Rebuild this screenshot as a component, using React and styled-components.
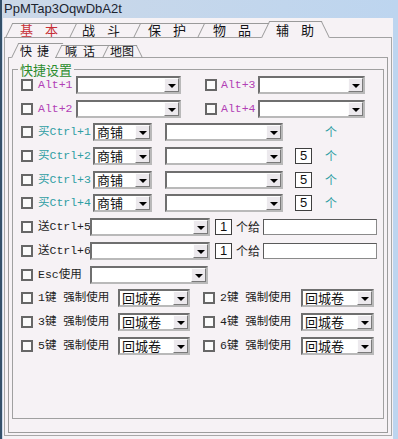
import React from "react";
import styled, { createGlobalStyle } from "styled-components";

const CJK = `"Noto Sans CJK SC", "Noto Sans", sans-serif`;
const MONO = `"Liberation Mono", "Noto Sans CJK SC", monospace`;
const SKEW = 0.4877; // tan(26deg)

const GlobalStyle = createGlobalStyle`
  html, body {
    margin: 0;
    padding: 0;
    background: #c6dbf1;
  }
  * {
    box-sizing: border-box;
  }
`;

const Window = styled.div`
  width: 398px;
  height: 439px;
  display: flex;
  flex-direction: column;
  background: linear-gradient(to right, #cbd8e8, #bdd5ef);
  border-left: 2px solid #34506a;
  overflow: hidden;
`;

const TitleBar = styled.div`
  height: 18px;
  flex-shrink: 0;
  padding-left: 2px;
  font: 13px/18px "Liberation Sans", Arial, sans-serif;
  color: #1c2430;
`;

const Client = styled.div`
  flex: 1;
  margin: 0 5px 0 1px;
  padding: 2px 1px 3px 1px;
  background: #f6f2f5;
  display: flex;
  flex-direction: column;
  min-height: 0;
`;

const TabStrip = styled.div`
  display: flex;
  align-items: flex-end;
  height: ${(p) => p.$h}px;
  flex-shrink: 0;
`;

const TabLead = styled.div`
  width: ${(p) => p.$w}px;
  border-bottom: 1px solid #a2a2a2;
`;

const TabFill = styled.div`
  flex: 1;
  border-bottom: 1px solid #a2a2a2;
`;

const Tab = styled.div`
  position: relative;
  flex-shrink: 0;
  width: ${(p) => p.$w}px;
  height: ${(p) => p.$h}px;
  padding: ${(p) => (p.$active ? 2 : 0)}px 0 0 ${(p) => p.$pad}px;
  font-family: ${CJK};
  font-size: ${(p) => p.$fs}px;
  line-height: ${(p) => p.$lh}px;
  letter-spacing: ${(p) => p.$ls}px;
  color: ${(p) => (p.$red ? "#c62f35" : "#121216")};
  white-space: nowrap;
  border-bottom: 1px solid ${(p) => (p.$active ? "transparent" : "#a2a2a2")};

  &::before {
    content: "";
    position: absolute;
    left: 0;
    top: 0;
    bottom: -1px;
    width: ${(p) =>
      p.$last ? `calc(100% - ${Math.round(2 * SKEW * p.$h)}px)` : "100%"};
    border-left: 1px solid #9a9a9a;
    border-top: 1px solid #9a9a9a;
    transform: skewX(-26deg);
    transform-origin: bottom left;
  }

  &::after {
    content: "";
    display: ${(p) => (p.$last ? "block" : "none")};
    position: absolute;
    right: 0;
    top: 0;
    bottom: -1px;
    border-right: 1px solid #9a9a9a;
    transform: skewX(26deg);
    transform-origin: bottom right;
  }
`;

const OuterPanel = styled.div`
  flex: 1;
  min-height: 0;
  display: flex;
  flex-direction: column;
  padding: 5px 3px 2px 3px;
  border: 1px solid #a8a8a8;
  border-top: none;
`;

const InnerPanel = styled.div`
  flex: 1;
  min-height: 0;
  display: flex;
  flex-direction: column;
  padding: 5px 3px 13px 3px;
  border: 1px solid #9c9c9c;
  border-top: none;
`;

const Group = styled.fieldset`
  flex: 1;
  margin: 0;
  padding: 0 8px;
  border: 1px solid #a0a0a0;
  min-width: 0;
`;

const Legend = styled.legend`
  margin-left: -3px;
  padding: 0 2px;
  font: 13px/13px ${CJK};
  color: #2b8c2d;
`;

const Rows = styled.div`
  display: flex;
  flex-direction: column;
  gap: 5.7px;
`;

const Row = styled.div`
  display: flex;
  align-items: center;
  height: 18px;
`;

const Check = styled.span`
  flex-shrink: 0;
  width: 12px;
  height: 12px;
  margin-left: ${(p) => p.$ml || 0}px;
  border: 2px solid #676767;
  background: #fbfbfb;
`;

const labelColors = {
  alt: "#b23fb5",
  buy: "#2f9ea3",
  plain: "#1e1e1e",
};

const Label = styled.span`
  flex-shrink: 0;
  width: ${(p) => p.$w}px;
  margin-left: ${(p) => p.$ml ?? 5}px;
  font: 11.5px/18px ${MONO};
  color: ${(p) => labelColors[p.$c || "plain"]};
  white-space: nowrap;
`;

const ComboBox = styled.div`
  flex-shrink: 0;
  display: flex;
  align-items: center;
  width: ${(p) => p.$w}px;
  height: 18px;
  margin-left: ${(p) => p.$ml || 0}px;
  padding-left: 2px;
  background: #fff;
  border: 2px solid;
  border-color: #6f6f6f #b9b9b9 #b9b9b9 #6f6f6f;
  font: 13px/14px ${CJK};
  color: #111;
`;

const ComboText = styled.span`
  flex: 1;
  white-space: nowrap;
`;

const DropButton = styled.span`
  width: 15px;
  align-self: stretch;
  display: flex;
  align-items: center;
  justify-content: center;
  padding-top: 2px;
  background: #ece9ed;
  border: 1px solid;
  border-color: #fdfdfd #7a7a7a #7a7a7a #fdfdfd;

  &::after {
    content: "";
    border-left: 4px solid transparent;
    border-right: 4px solid transparent;
    border-top: 4px solid #000;
  }
`;

const NumBox = styled.span`
  flex-shrink: 0;
  width: 17px;
  height: 16px;
  margin-left: ${(p) => p.$ml || 0}px;
  border: 1px solid #3f3f3f;
  background: #fff;
  font: 13px/14px "Liberation Sans", Arial, sans-serif;
  color: #111;
  text-align: center;
  visibility: ${(p) => (p.$hidden ? "hidden" : "visible")};
`;

const Unit = styled.span`
  flex-shrink: 0;
  margin-left: ${(p) => p.$ml || 0}px;
  font: 12px/18px ${CJK};
  color: ${(p) => (p.$teal ? "#2f9ea3" : "#1e1e1e")};
`;

const Field = styled.span`
  flex-shrink: 0;
  width: ${(p) => p.$w}px;
  height: 16px;
  margin-left: ${(p) => p.$ml || 0}px;
  background: #fff;
  border: 1px solid;
  border-color: #5a5a5a #8a8a8a #8a8a8a #5a5a5a;
`;

function Combo({ w, ml, text }) {
  return (
    <ComboBox $w={w} $ml={ml}>
      <ComboText>{text}</ComboText>
      <DropButton />
    </ComboBox>
  );
}

const outerTabs = [
  { name: "基本", w: 64, pad: 15, red: true },
  { name: "战斗", w: 64, pad: 13 },
  { name: "保护", w: 64, pad: 15 },
  { name: "物品", w: 64, pad: 16 },
  { name: "辅助", w: 69, pad: 15, active: true, last: true },
];

const innerTabs = [
  { name: "快捷", w: 44, pad: 9, ls: 5, active: true },
  { name: "喊话", w: 47, pad: 10, ls: 6 },
  { name: "地图", w: 41, pad: 8, ls: 0, last: true },
];

export default function App() {
  return (
    <>
      <GlobalStyle />
      <Window>
        <TitleBar>PpMTap3OqwDbA2t</TitleBar>
        <Client>
          <TabStrip $h={18}>
            <TabLead $w={1} />
            {outerTabs.map((t) => (
              <Tab
                key={t.name}
                $w={t.w}
                $h={t.active ? 17 : 15}
                $pad={t.pad}
                $fs={13}
                $lh={14}
                $ls={12}
                $red={t.red}
                $active={t.active}
                $last={t.last}
              >
                {t.name}
              </Tab>
            ))}
            <TabFill />
          </TabStrip>
          <OuterPanel>
            <TabStrip $h={15}>
              <TabLead $w={3} />
              {innerTabs.map((t) => (
                <Tab
                  key={t.name}
                  $w={t.w}
                  $h={t.active ? 15 : 13}
                  $pad={t.pad}
                  $fs={12}
                  $lh={12}
                  $ls={t.ls}
                  $active={t.active}
                  $last={t.last}
                >
                  {t.name}
                </Tab>
              ))}
              <TabFill />
            </TabStrip>
            <InnerPanel>
              <Group>
                <Legend>快捷设置</Legend>
                <Rows>
                  {[
                    ["Alt+1", "Alt+3"],
                    ["Alt+2", "Alt+4"],
                  ].map(([a, b]) => (
                    <Row key={a}>
                      <Check />
                      <Label $w={38} $c="alt">{a}</Label>
                      <Combo w={105} />
                      <Check $ml={24} />
                      <Label $ml={4} $w={37} $c="alt">{b}</Label>
                      <Combo w={107} />
                    </Row>
                  ))}

                  {[1, 2, 3, 4].map((n) => (
                    <Row key={`buy${n}`}>
                      <Check />
                      <Label $w={55} $c="buy">{`买Ctrl+${n}`}</Label>
                      <Combo w={59} text="商铺" />
                      <Combo w={118} ml={13} />
                      <NumBox $ml={12} $hidden={n === 1}>5</NumBox>
                      <Unit $ml={13} $teal>个</Unit>
                    </Row>
                  ))}

                  {[5, 6].map((n) => (
                    <Row key={`give${n}`}>
                      <Check />
                      <Label $w={52}>{`送Ctrl+${n}`}</Label>
                      <Combo w={120} />
                      <NumBox $ml={5}>1</NumBox>
                      <Unit $ml={4}>个给</Unit>
                      <Field $ml={3} $w={114} />
                    </Row>
                  ))}

                  <Row>
                    <Check />
                    <Label $w={52}>Esc使用</Label>
                    <Combo w={118} />
                  </Row>

                  {[
                    [1, 2],
                    [3, 4],
                    [5, 6],
                  ].map(([a, b]) => (
                    <Row key={`key${a}`}>
                      <Check />
                      <Label $w={80}>{`${a}键 强制使用`}</Label>
                      <Combo w={72} text="回城卷" />
                      <Check $ml={13} />
                      <Label $w={81}>{`${b}键 强制使用`}</Label>
                      <Combo w={73} text="回城卷" />
                    </Row>
                  ))}
                </Rows>
              </Group>
            </InnerPanel>
          </OuterPanel>
        </Client>
      </Window>
    </>
  );
}
